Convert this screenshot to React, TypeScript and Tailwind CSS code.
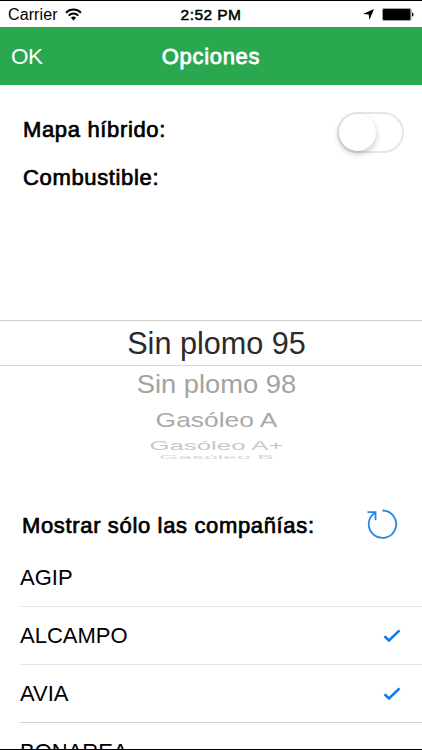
import { useState } from "react";

const fuels = [
  { name: "Sin plomo 95", row: "h-[44px]", text: "text-[30.6px] text-[#2a2a2a]" },
  { name: "Sin plomo 98", row: "h-[38px]", text: "text-[27.3px] text-[#a3a3a3] scale-y-[0.94]" },
  { name: "Gasóleo A", row: "h-[33px]", text: "text-[26.4px] text-[#a9a9a9] scale-y-[0.78]" },
  { name: "Gasóleo A+", row: "h-[17px]", text: "text-[25.8px] text-[#c8c8c8] scale-y-[0.52]" },
  { name: "Gasóleo B", row: "h-[7px]", text: "text-[24.5px] text-[#d6d6d6] scale-y-[0.2]" },
];

const companies = ["AGIP", "ALCAMPO", "AVIA", "BONAREA"];

export default function App() {
  const [hybrid, setHybrid] = useState(false);
  const [selected, setSelected] = useState(["ALCAMPO", "AVIA"]);

  const toggleCompany = (name: string) =>
    setSelected((s) => (s.includes(name) ? s.filter((n) => n !== name) : [...s, name]));

  return (
    <div className="flex h-[750px] w-[422px] flex-col overflow-hidden border-y border-black bg-white font-['Liberation_Sans',Arial,sans-serif] text-black">
      <StatusBar />
      <header className="grid h-[58px] shrink-0 grid-cols-[1fr_auto_1fr] items-center bg-[#29a850] text-white">
        <button className="pt-px pl-[11px] text-left text-[22.5px] tracking-[-0.5px]">OK</button>
        <h1 className="text-[22px] tracking-[0.7px] [-webkit-text-stroke:0.8px]">Opciones</h1>
      </header>

      <div className="flex h-[92px] shrink-0 items-center justify-between pr-[18px] pl-[23px]">
        <div className="pb-[2px]">
          <Label>Mapa híbrido:</Label>
        </div>
        <Toggle checked={hybrid} onChange={setHybrid} />
      </div>
      <div className="-mt-[15px] h-[158px] shrink-0 pl-[23px]">
        <Label>Combustible:</Label>
      </div>

      <Picker />

      <div className="mt-[39px] flex h-[51px] shrink-0 items-center justify-between pr-[24px] pl-[22px]">
        <div className="pt-[5px]">
          <Label>Mostrar sólo las compañías:</Label>
        </div>
        <button aria-label="Restablecer" className="pt-[2px]">
          <ResetIcon />
        </button>
      </div>

      <ul className="shrink-0 pl-5">
        {companies.map((name) => (
          <li
            key={name}
            onClick={() => toggleCompany(name)}
            className="flex h-[58px] items-center justify-between border-b border-[#e4e4e4] pr-[21px] text-[22px] nth-3:border-[#d2d2d2]"
          >
            {name}
            {selected.includes(name) && <CheckIcon />}
          </li>
        ))}
      </ul>
    </div>
  );
}

function StatusBar() {
  return (
    <div className="grid h-[26px] shrink-0 grid-cols-[1fr_auto_1fr] items-center px-2 text-[16px]">
      <div className="flex items-center gap-[7px] pt-px">
        <span className="tracking-[0.1px]">Carrier</span>
        <svg width="17" height="13" viewBox="0 0 17 13" fill="none" stroke="black" strokeWidth="2" className="-mt-px">
          <path d="M1 4.7a10.6 10.6 0 0 1 15 0" />
          <path d="M3.7 7.6a6.8 6.8 0 0 1 9.6 0" />
          <path d="M8.5 12.4 5.9 9.7a3.8 3.8 0 0 1 5.2 0z" fill="black" stroke="none" />
        </svg>
      </div>
      <span className="pt-px text-[15.5px] tracking-[0.45px] [-webkit-text-stroke:0.5px]">2:52 PM</span>
      <div className="flex items-center justify-end gap-[8px]">
        <svg width="11" height="11" viewBox="0 0 11 11">
          <path d="M11 0 6.4 11 5.7 5.5 0 5z" />
        </svg>
        <svg width="32" height="13" viewBox="0 0 32 13">
          <rect x="0.4" y="0.4" width="28.6" height="12.2" rx="1.5" fill="white" stroke="#777" strokeWidth="0.8" />
          <rect x="1" y="1" width="27.4" height="11" rx="1" />
          <path d="M30 4.5c2 .6 2 3.4 0 4z" />
        </svg>
      </div>
    </div>
  );
}

function Label({ children }: { children: React.ReactNode }) {
  return (
    <span className="block text-[22px] leading-[32px] tracking-[0.65px] [-webkit-text-stroke:0.7px]">{children}</span>
  );
}

function Toggle({ checked, onChange }: { checked: boolean; onChange: (v: boolean) => void }) {
  return (
    <button
      onClick={() => onChange(!checked)}
      aria-pressed={checked}
      className={`mt-[2px] flex h-[41px] w-[67px] items-center rounded-full border-2 border-[#e6e6e6] ${
        checked ? "justify-end bg-[#29a850]" : "bg-white"
      }`}
    >
      <span className="size-[37px] rounded-full bg-white shadow-[0_3px_6px_rgba(0,0,0,0.22)]" />
    </button>
  );
}

function Picker() {
  return (
    <div className="h-[139px] shrink-0 overflow-hidden border-t border-[#cfcfcf]">
      {fuels.map((fuel, i) => (
        <div
          key={fuel.name}
          className={`flex items-center justify-center pl-[11px] ${fuel.row} ${
            i === 0 ? "box-content border-b border-[#d6d6d6]" : ""
          }`}
        >
          <span className={`leading-none whitespace-nowrap ${fuel.text}`}>{fuel.name}</span>
        </div>
      ))}
    </div>
  );
}

function ResetIcon() {
  return (
    <svg width="31" height="31" viewBox="0 0 31 31" fill="none" stroke="#2b84e4" strokeWidth="1.8">
      <path d="M15.5 1.5A13.7 13.7 0 1 1 8 3.7" />
      <path d="M0.5 3.2H8.5V11.2" />
    </svg>
  );
}

function CheckIcon() {
  return (
    <svg width="18" height="14" viewBox="0 0 18 14" fill="none" stroke="#1079f0" strokeWidth="2.6">
      <path d="M1.5 7.2 6 11.4 16.5 1.4" />
    </svg>
  );
}
